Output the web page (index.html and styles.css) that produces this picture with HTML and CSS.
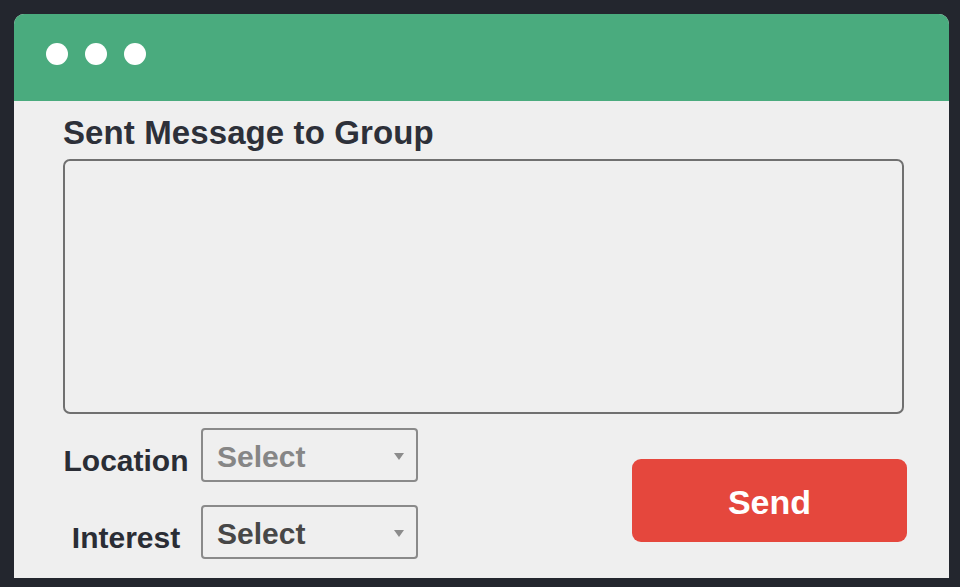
FILE: index.html
```html
<!DOCTYPE html>
<html>
<head>
<meta charset="utf-8">
<link rel="stylesheet" href="styles.css">
</head>
<body>
<div class="window">
  <div class="titlebar">
    <span class="dot"></span><span class="dot"></span><span class="dot"></span>
  </div>
  <div class="content">
    <div class="title">Sent Message to Group</div>
    <div class="message"></div>
    <div class="bottom">
      <div class="filters">
        <div class="label">Location</div>
        <div class="select placeholder"><span>Select</span><span class="arrow"></span></div>
        <div class="label">Interest</div>
        <div class="select"><span>Select</span><span class="arrow"></span></div>
      </div>
      <button class="send">Send</button>
    </div>
  </div>
</div>
</body>
</html>
```
FILE: styles.css
```css
html, body {
  margin: 0;
  height: 100%;
}
body {
  background: #23262e;
  padding: 14px 11px 9px 14px;
  box-sizing: border-box;
  font-family: "Liberation Sans", Arial, sans-serif;
}
.window {
  width: 935px;
  height: 564px;
  background: #efefef;
  border-radius: 10px 10px 0 0;
  overflow: hidden;
  display: flex;
  flex-direction: column;
}
.titlebar {
  height: 87px;
  background: #4aab7e;
  display: flex;
  align-items: flex-start;
  padding: 29px 0 0 32px;
  box-sizing: border-box;
  gap: 17px;
}
.dot {
  width: 22px;
  height: 22px;
  border-radius: 50%;
  background: #ffffff;
}
.content {
  padding: 12px 45px 0 49px;
  display: flex;
  flex-direction: column;
}
.title {
  font-size: 33px;
  line-height: 38px;
  font-weight: bold;
  color: #2d3039;
  padding-top: 1px;
  margin-bottom: -1px;
  letter-spacing: 0.1px;
}
.message {
  margin-top: 8px;
  height: 255px;
  border: 2px solid #707070;
  border-radius: 7px;
  box-sizing: border-box;
}
.bottom {
  display: flex;
  justify-content: space-between;
  align-items: flex-start;
  padding-top: 14px;
}
.filters {
  display: grid;
  grid-template-columns: 126px 217px;
  column-gap: 12px;
  row-gap: 23px;
  align-items: center;
}
.label {
  text-align: center;
  font-size: 30px;
  font-weight: bold;
  color: #2a2d35;
  padding-top: 11px;
}
.select {
  height: 54px;
  border: 2px solid #8a8a8a;
  border-radius: 4px;
  box-sizing: border-box;
  display: flex;
  align-items: center;
  justify-content: space-between;
  padding: 3px 12px 0 14px;
  font-size: 30px;
  font-weight: bold;
  color: #474747;
}
.select.placeholder {
  color: #868686;
}
.arrow {
  width: 0;
  height: 0;
  border-left: 5.5px solid transparent;
  border-right: 5.5px solid transparent;
  border-top: 7px solid #8c8c8c;
}
.send {
  margin-top: 31px;
  margin-right: -3px;
  width: 275px;
  height: 83px;
  border: none;
  border-radius: 9px;
  background: #e5473d;
  color: #ffffff;
  font-family: "Liberation Sans", Arial, sans-serif;
  font-size: 34px;
  font-weight: bold;
  padding: 3px 0 0;
}
```
